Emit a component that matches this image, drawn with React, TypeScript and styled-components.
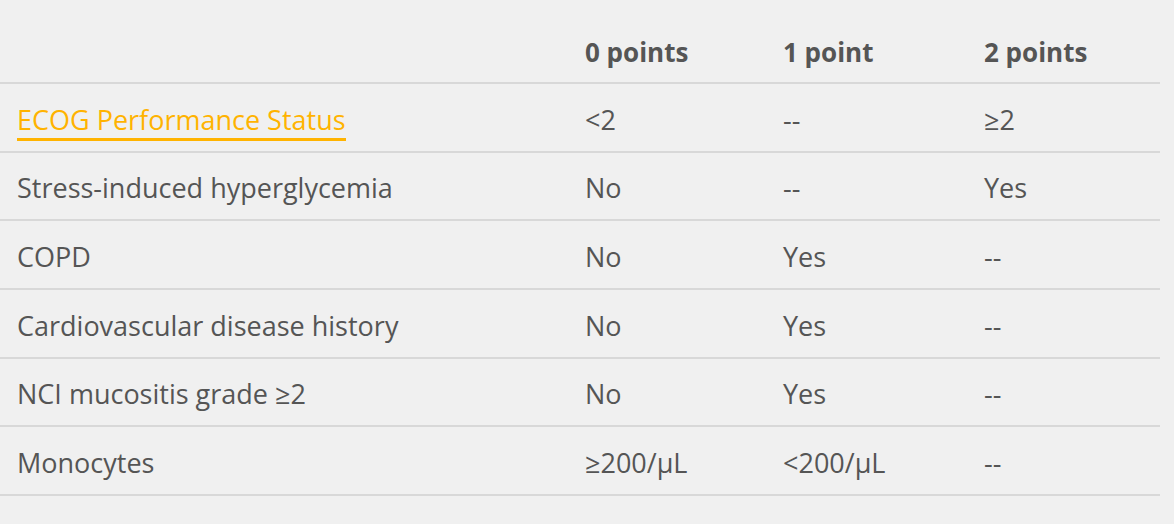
import React from "react";
import styled, { createGlobalStyle } from "styled-components";

const Global = createGlobalStyle`
  html, body { margin: 0; padding: 0; background: #f0f0f0; }
  body { font-family: "Open Sans", "Noto Sans", sans-serif; color: #555555; }
`;

const Table = styled.div`
  width: 1160px;
  display: flex;
  flex-direction: column;
`;

const Row = styled.div<{ $header?: boolean }>`
  display: grid;
  grid-template-columns: 568px 198px 201px 1fr;
  box-sizing: border-box;
  height: ${(p) => (p.$header ? "84px" : "68.67px")};
  border-bottom: 2px solid #d8d8d8;
  align-items: ${(p) => (p.$header ? "flex-end" : "center")};
  padding: ${(p) => (p.$header ? "0 0 13px" : "5px 0 0")};
`;

const Cell = styled.div<{ $bold?: boolean }>`
  padding-left: 17px;
  font-size: ${(p) => (p.$bold ? "26px" : "27px")};
  line-height: 34px;
  font-weight: ${(p) => (p.$bold ? 700 : 400)};
  color: #555555;
  white-space: nowrap;
`;

const Link = styled.a`
  color: #ffb300;
  text-decoration: none;
  border-bottom: 3px solid #ffb300;
`;

const rows: [React.ReactNode, string, string, string][] = [
  [<Link href="#">ECOG Performance Status</Link>, "<2", "--", "≥2"],
  ["Stress-induced hyperglycemia", "No", "--", "Yes"],
  ["COPD", "No", "Yes", "--"],
  ["Cardiovascular disease history", "No", "Yes", "--"],
  ["NCI mucositis grade ≥2", "No", "Yes", "--"],
  ["Monocytes", "≥200/μL", "<200/μL", "--"],
];

export default function App() {
  return (
    <>
      <Global />
      <Table>
        <Row $header>
          <Cell />
          <Cell $bold>0 points</Cell>
          <Cell $bold>1 point</Cell>
          <Cell $bold>2 points</Cell>
        </Row>
        {rows.map((r, i) => (
          <Row key={i}>
            {r.map((c, j) => (
              <Cell key={j}>{c}</Cell>
            ))}
          </Row>
        ))}
      </Table>
    </>
  );
}
